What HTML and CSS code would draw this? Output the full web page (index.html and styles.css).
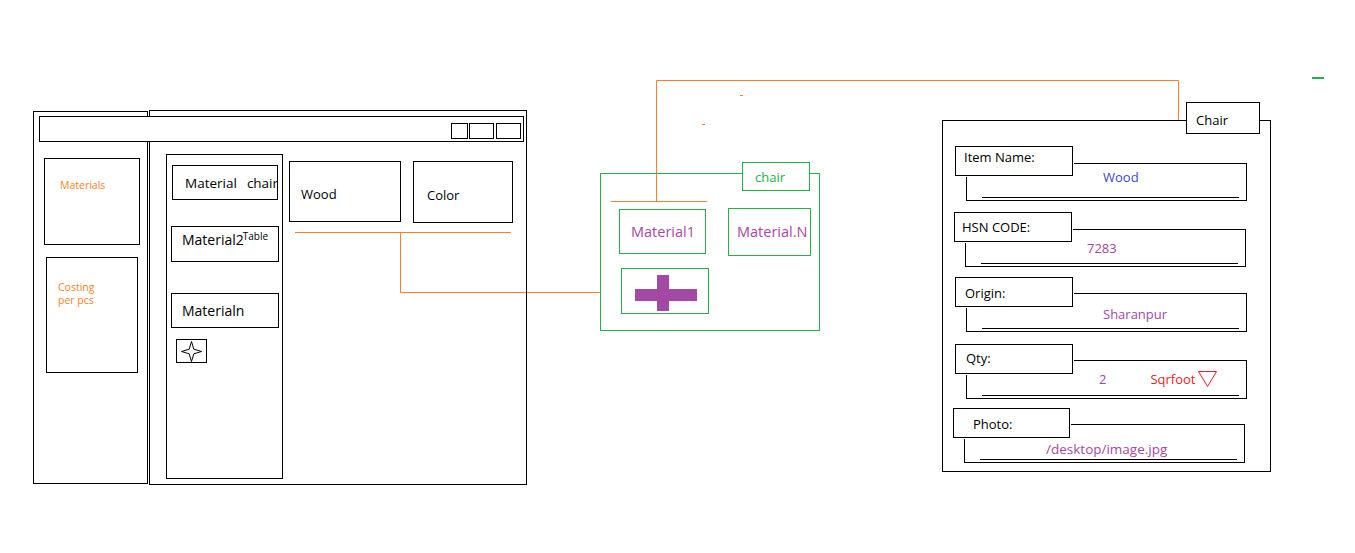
FILE: index.html
```html
<!DOCTYPE html>
<html lang="en">
<head>
    <meta charset="UTF-8">
    <title>Material picker - wireframe</title>
    <link rel="stylesheet" href="styles.css">
</head>
<body>
    <div class="board">
        <!-- connector wires between the sketch blocks -->
        <svg class="wires" width="1355" height="553" viewBox="0 0 1355 553">
            <g fill="none" stroke="#ff7f27" stroke-width="1">
                <path d="M295 232.5H511"/>
                <path d="M400.5 232V292.5H600"/>
                <path d="M611 201.5H707"/>
                <path d="M656.5 201V80.5H1178.5V120"/>
                <path d="M740 95.5H743"/>
                <path d="M702 124.5H705"/>
            </g>
            <path d="M1312 78H1324" stroke="#22b14c" stroke-width="2"/>
        </svg>

        <!-- the app window -->
        <div class="window">
            <div class="titlebar">
                <span class="tb-btn tb-min"></span>
                <span class="tb-btn tb-max"></span>
                <span class="tb-btn tb-close"></span>
            </div>

            <aside class="side">
                <div class="side-box materials">Materials</div>
                <div class="side-box costing">Costing<br>per pcs</div>
            </aside>

            <section class="main">
                <div class="mat-list">
                    <div class="mat mat-first">Material<span class="mat-tag">chair</span></div>
                    <div class="mat mat-second">Material2<span class="sup">Table</span></div>
                    <div class="mat mat-n">Materialn</div>
                    <button class="add-star" type="button">
                        <svg width="21" height="21" viewBox="0 0 21 21">
                            <path d="M10.5 0.5L12.8 8.2L20.5 10.5L12.8 12.8L10.5 20.5L8.2 12.8L0.5 10.5L8.2 8.2Z" fill="none" stroke="#000" stroke-width="1"/>
                        </svg>
                    </button>
                </div>
                <div class="props">
                    <div class="prop prop-wood">Wood</div>
                    <div class="prop prop-color">Color</div>
                </div>
            </section>
        </div>

        <!-- material group -->
        <div class="stock">
            <div class="stock-tab">chair</div>
            <div class="stock-row">
                <div class="stock-item item-first">Material1</div>
                <div class="stock-item item-last">Material.N</div>
            </div>
            <div class="stock-add">
                <svg width="86" height="44" viewBox="0 0 86 44">
                    <rect x="13" y="20" width="62" height="12" fill="#a349a4"/>
                    <rect x="35" y="6" width="12" height="36" fill="#a349a4"/>
                </svg>
            </div>
        </div>

        <!-- item details card -->
        <div class="item-card">
            <div class="item-tab">Chair</div>

            <div class="field f-name">
                <div class="label">Item Name:</div>
                <div class="value">
                    <div class="value-text blue">Wood</div>
                    <div class="rule"></div>
                </div>
            </div>

            <div class="field f-hsn">
                <div class="label">HSN CODE:</div>
                <div class="value">
                    <div class="value-text">7283</div>
                    <div class="rule"></div>
                </div>
            </div>

            <div class="field f-origin">
                <div class="label">Origin:</div>
                <div class="value">
                    <div class="value-text">Sharanpur</div>
                    <div class="rule"></div>
                </div>
            </div>

            <div class="field f-qty">
                <div class="label">Qty:</div>
                <div class="value">
                    <div class="value-text qty-row">
                        <span>2</span>
                        <span class="unit">Sqrfoot</span>
                        <svg class="unit-arrow" width="19" height="16" viewBox="0 0 19 16">
                            <path d="M0.5 0.5H18.5L9.5 15.5Z" fill="none" stroke="#ed1c24" stroke-width="1"/>
                        </svg>
                    </div>
                    <div class="rule"></div>
                </div>
            </div>

            <div class="field f-photo">
                <div class="label">Photo:</div>
                <div class="value">
                    <div class="value-text">/desktop/image.jpg</div>
                    <div class="rule"></div>
                </div>
            </div>
        </div>
    </div>
</body>
</html>
```

FILE: styles.css
```css
/*
Wireframe sketch: a material picker window, a material group
and the item details card, joined by orange wires.
*/
* {
    margin: 0;
    padding: 0;
    box-sizing: border-box;
}

body {
    font-family: 'Open Sans', 'Liberation Sans', sans-serif;
    font-size: 13px;
    line-height: 18px;
    color: #000;
    background: #fff;
    overflow: hidden;
}

.board {
    position: relative;
    width: 1355px;
    height: 553px;
}

.wires {
    position: absolute;
    left: 0;
    top: 0;
    pointer-events: none;
}

/* ---------- app window ---------- */
.window {
    position: absolute;
    left: 33px;
    top: 110px;
    display: flex;
    align-items: flex-start;
}

.titlebar {
    position: absolute;
    left: 6px;
    top: 6px;
    width: 485px;
    height: 26px;
    border: 1px solid #000;
    background: #fff;
    display: flex;
    justify-content: flex-end;
    align-items: flex-start;
    gap: 1px;
    padding: 6px 2px 0 0;
    z-index: 1;
}

.tb-btn {
    display: block;
    width: 25px;
    height: 16px;
    border: 1px solid #000;
}

.tb-min {
    width: 17px;
}

.tb-close {
    margin-left: 1px;
}

.side {
    width: 115px;
    height: 373px;
    margin-top: 1px;
    border: 1px solid #000;
}

.side-box {
    border: 1px solid #000;
    color: #ff7f27;
    font-size: 10.5px;
    line-height: 13px;
}

.materials {
    width: 96px;
    height: 87px;
    margin: 46px 0 0 10px;
    padding: 20px 0 0 15px;
}

.costing {
    width: 92px;
    height: 116px;
    margin: 12px 0 0 12px;
    padding: 23px 0 0 11px;
}

.main {
    display: flex;
    align-items: flex-start;
    width: 378px;
    height: 375px;
    margin-left: 1px;
    border: 1px solid #000;
}

.mat-list {
    display: flex;
    flex-direction: column;
    align-items: flex-start;
    width: 117px;
    height: 325px;
    margin: 43px 0 0 16px;
    border: 1px solid #000;
}

.mat {
    display: flex;
    align-items: center;
    width: 108px;
    height: 35px;
    margin-left: 4px;
    padding-left: 10px;
    border: 1px solid #000;
    font-size: 14px;
    white-space: nowrap;
    overflow: hidden;
}

.mat-first {
    width: 106px;
    margin: 10px 0 0 5px;
    padding-left: 12px;
    font-size: 13.5px;
}

.mat-tag {
    margin-left: 10px;
}

.mat-second {
    height: 36px;
    margin-top: 26px;
    align-items: flex-start;
    padding-top: 4px;
}

.sup {
    font-size: 10px;
    line-height: 10px;
    vertical-align: 6px;
    margin-left: -1px;
}

.mat-n {
    margin-top: 31px;
}

.add-star {
    display: flex;
    align-items: center;
    justify-content: center;
    width: 31px;
    height: 24px;
    margin: 11px 0 0 9px;
    border: 1px solid #000;
    background: #fff;
}

.props {
    display: flex;
    align-items: flex-start;
    margin: 50px 0 0 6px;
}

.prop {
    border: 1px solid #000;
}

.prop-wood {
    width: 112px;
    height: 61px;
    padding: 23px 0 0 11px;
}

.prop-color {
    width: 100px;
    height: 62px;
    margin-left: 12px;
    padding: 24px 0 0 13px;
}

/* ---------- material group ---------- */
.stock {
    position: absolute;
    left: 600px;
    top: 173px;
    width: 220px;
    height: 158px;
    border: 1px solid #22b14c;
}

.stock-tab {
    position: absolute;
    left: 141px;
    top: -12px;
    width: 68px;
    height: 29px;
    padding: 5px 0 0 12px;
    border: 1px solid #22b14c;
    background: #fff;
    color: #22b14c;
}

.stock-row {
    display: flex;
    align-items: flex-start;
    padding-top: 34px;
}

.stock-item {
    display: flex;
    align-items: center;
    border: 1px solid #22b14c;
    color: #a349a4;
    font-size: 14.5px;
}

.item-first {
    width: 87px;
    height: 45px;
    margin: 1px 0 0 18px;
    padding-left: 11px;
}

.item-last {
    width: 83px;
    height: 48px;
    margin-left: 22px;
    padding-left: 8px;
}

.stock-add {
    width: 88px;
    height: 46px;
    margin: 12px 0 0 20px;
    border: 1px solid #22b14c;
}

.stock-add svg {
    display: block;
}

/* ---------- item details card ---------- */
.item-card {
    position: absolute;
    left: 942px;
    top: 120px;
    width: 329px;
    height: 352px;
    padding: 25px 0 0 12px;
    border: 1px solid #000;
}

.item-tab {
    position: absolute;
    left: 243px;
    top: -19px;
    width: 74px;
    height: 32px;
    padding: 8px 0 0 9px;
    border: 1px solid #000;
    background: #fff;
}

.label {
    position: relative;
    z-index: 1;
    width: 118px;
    height: 30px;
    border: 1px solid #000;
    background: #fff;
    box-shadow: 0 0 0 1px #fff;
}

.value {
    display: flex;
    flex-direction: column;
    width: 281px;
    height: 38px;
    margin: -13px 0 0 11px;
    border: 1px solid #000;
    color: #a349a4;
}

.value-text {
    white-space: nowrap;
}

.blue {
    color: #3f48cc;
}

.rule {
    margin: auto 7px 2px 15px;
    border-top: 1px solid #000;
}

.f-name .label {
    padding: 1px 0 0 8px;
}

.f-name .value-text {
    padding: 4px 0 0 136px;
}

.f-hsn {
    margin: 11px 0 0 -1px;
}

.f-hsn .label {
    padding: 5px 0 0 7px;
}

.f-hsn .value-text {
    padding: 9px 0 0 121px;
}

.f-origin {
    margin-top: 10px;
}

.f-origin .label {
    padding: 6px 0 0 9px;
}

.f-origin .value {
    height: 39px;
    margin-top: -14px;
}

.f-origin .value-text {
    padding: 11px 0 0 136px;
}

.f-qty {
    margin-top: 12px;
}

.f-qty .label {
    padding: 4px 0 0 10px;
}

.f-qty .value {
    height: 39px;
    margin-top: -14px;
}

.qty-row {
    display: flex;
    align-items: center;
    padding: 9px 0 0 132px;
}

.unit {
    margin-left: 44px;
    color: #ed1c24;
}

.unit-arrow {
    display: block;
    margin-left: 3px;
}

.f-photo {
    margin: 9px 0 0 -2px;
}

.f-photo .label {
    width: 117px;
    padding: 6px 0 0 19px;
}

.f-photo .value {
    height: 39px;
    margin-top: -14px;
}

.f-photo .value-text {
    padding: 15px 0 0 81px;
    font-size: 13.5px;
}
```
